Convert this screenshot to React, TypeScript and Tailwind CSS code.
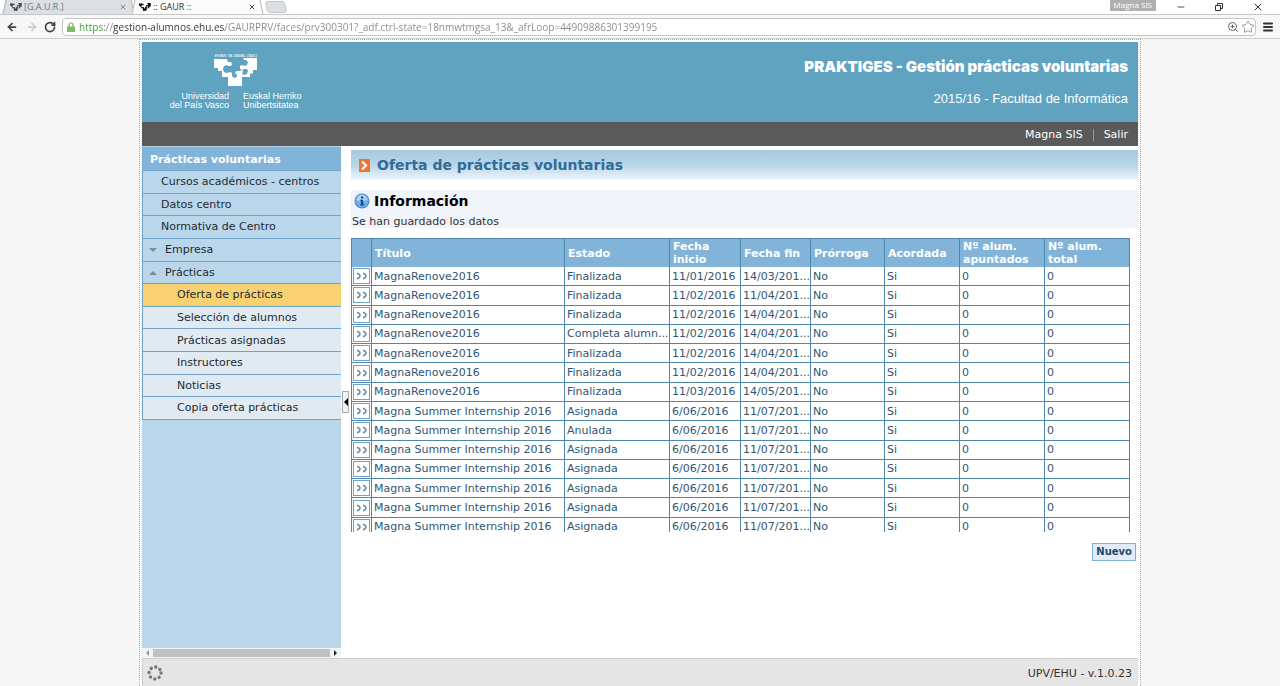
import React, { useState } from 'react';
import { Lock, Menu, Minus, RotateCw, Star, X, ZoomIn, ArrowLeft, ArrowRight } from 'lucide-react';

interface Practica {
  titulo: string;
  estado: string;
  inicio: string;
  fin: string;
}

const RENOVE = 'MagnaRenove2016';
const SUMMER = 'Magna Summer Internship 2016';

const practicas: Practica[] = [
  { titulo: RENOVE, estado: 'Finalizada', inicio: '11/01/2016', fin: '14/03/201...' },
  { titulo: RENOVE, estado: 'Finalizada', inicio: '11/02/2016', fin: '11/04/201...' },
  { titulo: RENOVE, estado: 'Finalizada', inicio: '11/02/2016', fin: '14/04/201...' },
  { titulo: RENOVE, estado: 'Completa alumn...', inicio: '11/02/2016', fin: '14/04/201...' },
  { titulo: RENOVE, estado: 'Finalizada', inicio: '11/02/2016', fin: '14/04/201...' },
  { titulo: RENOVE, estado: 'Finalizada', inicio: '11/02/2016', fin: '14/04/201...' },
  { titulo: RENOVE, estado: 'Finalizada', inicio: '11/03/2016', fin: '14/05/201...' },
  { titulo: SUMMER, estado: 'Asignada', inicio: '6/06/2016', fin: '11/07/201...' },
  { titulo: SUMMER, estado: 'Anulada', inicio: '6/06/2016', fin: '11/07/201...' },
  { titulo: SUMMER, estado: 'Asignada', inicio: '6/06/2016', fin: '11/07/201...' },
  { titulo: SUMMER, estado: 'Asignada', inicio: '6/06/2016', fin: '11/07/201...' },
  { titulo: SUMMER, estado: 'Asignada', inicio: '6/06/2016', fin: '11/07/201...' },
  { titulo: SUMMER, estado: 'Asignada', inicio: '6/06/2016', fin: '11/07/201...' },
  { titulo: SUMMER, estado: 'Asignada', inicio: '6/06/2016', fin: '11/07/201...' },
];

const columnas = ['Título', 'Estado', 'Fecha inicio', 'Fecha fin', 'Prórroga', 'Acordada', 'Nº alum. apuntados', 'Nº alum. total'];

const menu = [
  { label: 'Cursos académicos - centros', level: 1 },
  { label: 'Datos centro', level: 1 },
  { label: 'Normativa de Centro', level: 1 },
  { label: 'Empresa', level: 1, arrow: 'down' },
  { label: 'Prácticas', level: 1, arrow: 'up' },
  { label: 'Oferta de prácticas', level: 2 },
  { label: 'Selección de alumnos', level: 2 },
  { label: 'Prácticas asignadas', level: 2 },
  { label: 'Instructores', level: 2 },
  { label: 'Noticias', level: 2 },
  { label: 'Copia oferta prácticas', level: 2 },
];

function EhuMark({ className }: { className?: string }) {
  return (
    <svg viewBox="0 0 44 32" className={className} fill="currentColor" aria-hidden="true">
      <path d="M0 1h13l1 3 3 0 1 2-1 2-3 0-1-1-3 1-1 3 1 3 3 1 3-1 2 1 0 3 2 2 3-1 0-2-2-2 1-2 4 0 2-1 1 1-1 3 2 1 3-1 1-3-1-2-3 0-2 1-2-1 0-3 2-1 3 1 2-1 1-3-2-2-2 0-1-3h12l2 1v12h-4v3l-3 1v3h-8v9H14v-9H8v-6H4v-3H0z" />
    </svg>
  );
}

function BrowserTab({ title, active }: { title: string; active?: boolean }) {
  return (
    <div className="relative flex h-full w-[129px] items-center pl-1.5 pr-1.5">
      <div
        className={`absolute inset-y-0 left-0 w-1/2 -skew-x-12 border-l border-[#b5b5b5] ${active ? 'bg-[#fbfbfb]' : 'bg-[#dcdfe4]'}`}
      />
      <div
        className={`absolute inset-y-0 right-0 w-2/3 skew-x-12 border-r border-[#b5b5b5] ${active ? 'bg-[#fbfbfb]' : 'bg-[#dcdfe4]'}`}
      />
      <EhuMark className={`relative h-[9px] w-3 ${active ? 'text-black' : 'text-[#444]'}`} />
      <span className={`relative ml-0.5 flex-1 text-[9px] leading-[14px] ${active ? 'text-[#333]' : 'text-[#777]'}`}>{title}</span>
      <button aria-label="Cerrar pestaña" className="relative">
        <X className={`size-2 ${active ? 'text-[#444]' : 'text-[#888]'}`} strokeWidth={3} />
      </button>
    </div>
  );
}

function BrowserChrome() {
  const [url, setUrl] = useState(
    'https://gestion-alumnos.ehu.es/GAURPRV/faces/prv300301?_adf.ctrl-state=18nmwtmgsa_13&_afrLoop=44909886301399195'
  );

  return (
    <header className="font-['Open_Sans','Noto_Sans',sans-serif]">
      <div className="flex h-[14px] overflow-hidden bg-white pl-1">
        <BrowserTab title="[G.A.U.R.]" />
        <BrowserTab title=":: GAUR ::" active />
        <button aria-label="Nueva pestaña" className="my-px ml-1 w-5 skew-x-12 rounded-sm border border-[#c4c8ce] bg-[#dcdfe4]" />
        <div className="ml-auto flex items-start">
          <span className="mr-5 h-[11px] bg-[#b0b0b0] px-1 text-[8px] leading-[10px] text-white">Magna SIS</span>
          <div className="flex h-[14px] items-center gap-7 pr-4 text-[#333]">
            <button aria-label="Minimizar"><Minus className="size-2.5" /></button>
            <button aria-label="Restaurar">
              <svg viewBox="0 0 10 10" className="size-2.5" fill="none" stroke="currentColor">
                <path d="M1.5 3.500h5v5h-5zM3.500 3.500v-2h5v5h-2" />
              </svg>
            </button>
            <button aria-label="Cerrar"><X className="size-3" strokeWidth={2} /></button>
          </div>
        </div>
      </div>
      <div className="flex h-[25px] items-center border-y border-t-[#c8c8c8] border-b-[#cfcfc8] bg-[#f7f7f7] pl-1.5 pr-1.5">
        <button aria-label="Atrás"><ArrowLeft className="size-3 text-[#444]" strokeWidth={3.500} /></button>
        <button aria-label="Adelante" className="ml-2"><ArrowRight className="size-3 text-[#ccc]" strokeWidth={3.500} /></button>
        <button aria-label="Recargar" className="ml-1.5"><RotateCw className="size-3 text-[#444]" strokeWidth={3.500} /></button>
        <div className="ml-1.5 flex h-[18px] flex-1 items-center rounded-sm border border-[#c6c6c6] bg-white pl-1 text-[#666]">
          <svg viewBox="0 0 8 10" className="h-2.5 w-2" aria-hidden="true">
            <path d="M2 5V3a2 2 0 0 1 4 0v2" fill="none" stroke="#8a9a80" strokeWidth="1.200" />
            <path d="M0 4.500h8V10H0z" fill="#7cc15c" />
          </svg>
          <input
            aria-label="Dirección"
            value={url}
            onChange={(e) => setUrl(e.target.value)}
            className="ml-1 h-4 flex-1 bg-[linear-gradient(90deg,#3f9a37_0_26px,#888_26px_34px,#333_34px_146px,#888_146px)] bg-clip-text text-[10px] text-transparent outline-none"
          />
          <ZoomIn className="size-3" strokeWidth={2} />
          <Star className="ml-0.5 size-3.5 text-[#888]" strokeWidth={1.500} />
        </div>
        <button aria-label="Menú" className="ml-1.5"><Menu className="size-3 text-[#333]" strokeWidth={4} /></button>
      </div>
    </header>
  );
}

function Sidebar() {
  return (
    <aside className="flex w-[199px] shrink-0 flex-col bg-[#bad6ea]">
      <h2 className="h-[24px] border-t border-[#b5d2e6] bg-[#82b4d9] pl-2 text-[11px] leading-[25px] font-bold text-white">
        Prácticas voluntarias
      </h2>
      <nav className="grid h-[250px] auto-rows-fr border-b border-l border-[#6fa3cb] text-[11px] text-[#222b33]">
        {menu.map((item) => (
          <a
            key={item.label}
            href="#"
            className={`flex items-center border-t border-[#6fa3cb] pt-px ${
              item.label === 'Oferta de prácticas' ? 'bg-[#f8d272]' : item.level === 2 ? 'bg-[#e1e9f1]' : 'bg-[#bad6ea]'
            } ${item.level === 2 ? 'pl-[34px]' : item.arrow ? 'pl-1.5' : 'pl-[18px]'}`}
          >
            {item.arrow && (
              <svg viewBox="0 0 8 4" className="mr-2 h-1 w-2 fill-[#7f8c96]" aria-hidden="true">
                <path d={item.arrow === 'down' ? 'M0 0h8L4 4z' : 'M0 4h8L4 0z'} />
              </svg>
            )}
            {item.label}
          </a>
        ))}
      </nav>
      {/* barra de desplazamiento horizontal */}
      <div className="mt-auto flex h-[10px] items-center bg-[#f3f3f3] px-1">
        <svg viewBox="0 0 3 6" className="h-1.5 w-[3px] fill-[#999]" aria-hidden="true"><path d="M3 0v6L0 3z" /></svg>
        <div className="mx-1 h-2 flex-1 bg-[#c1c1c1]" />
        <svg viewBox="0 0 3 6" className="h-1.5 w-[3px] fill-[#222]" aria-hidden="true"><path d="M0 0v6l3-3z" /></svg>
      </div>
    </aside>
  );
}

function InfoIcon() {
  return (
    <svg viewBox="0 0 16 16" className="size-4" aria-hidden="true">
      <circle cx="8" cy="8" r="7.500" fill="#4a82c4" />
      <circle cx="8" cy="8" r="6.500" fill="#6fb0ea" />
      <path d="M2.500 7a5.500 5.500 0 0 1 11 0q-5.500 2-11 0z" fill="#a9d2f6" />
      <path d="M7 3.500h2.200v2H7zM6.200 6.700h3v4.500h1v1.300H6v-1.300h1V8h-.8z" fill="#174a94" />
    </svg>
  );
}

function TablaPracticas() {
  return (
    <div className="mr-2 h-[294px] overflow-hidden">
      <table className="h-[299px] w-full table-fixed border-separate border-spacing-0 border-t border-l border-[#4f86ab] text-[11px] leading-[13px] text-[#2f5674]">
        <colgroup>
          <col className="w-[20px]" />
          <col />
          <col className="w-[105px]" />
          <col className="w-[71px]" />
          <col className="w-[70px]" />
          <col className="w-[74px]" />
          <col className="w-[75px]" />
          <col className="w-[85px]" />
          <col className="w-[85px]" />
        </colgroup>
        <thead>
          <tr className="h-[28px] bg-[#82b4d9] text-left text-white">
            <th aria-label="Ver" className="border-r border-[#4f86ab] p-0" />
            {columnas.map((col) => (
              <th key={col} className="border-r border-[#4f86ab] py-0 pr-0 pl-[3px] align-middle font-bold">
                {col}
              </th>
            ))}
          </tr>
        </thead>
        <tbody>
          {practicas.map((p, i) => (
            <tr key={i}>
              <td className="border-r border-b border-[#4f86ab] p-px">
                <button aria-label="Ver práctica" className="flex h-4 w-full items-center justify-center border border-[#6ba3cc] bg-white">
                  <svg viewBox="0 0 12 8" className="h-2 w-3" fill="none" stroke="#6d8ea6" strokeWidth="1.600" aria-hidden="true">
                    <path d="M1 1.200q3 1 3 2.800t-3 2.800M7 1.200q3 1 3 2.800t-3 2.800" />
                  </svg>
                </button>
              </td>
              {[p.titulo, p.estado, p.inicio, p.fin, 'No', 'Si', '0', '0'].map((valor, j) => (
                <td key={j} className="border-r border-b border-[#4f86ab] py-0 pr-0 pl-0.5 whitespace-nowrap">
                  {valor}
                </td>
              ))}
            </tr>
          ))}
        </tbody>
      </table>
    </div>
  );
}

export default function App() {
  return (
    <div className="flex min-h-screen flex-col bg-[#f6f6f6] font-['DejaVu_Sans',Verdana,sans-serif]">
      <BrowserChrome />
      <div className="mx-auto flex w-full max-w-[1002px] flex-1 flex-col border border-b-0 border-dotted border-[#a9a0a4] bg-white px-0.5 pt-0.5">
        <div className="flex h-20 justify-between bg-[#5fa3c1] text-white">
          <div className="ml-6 flex w-[140px] flex-col items-center pt-3 font-['Liberation_Sans',Arial,sans-serif]">
            <span className="h-1 text-[4px] leading-[4px]">EMAN TA ZABAL ZAZU</span>
            <EhuMark className="h-8 w-11" />
            <div className="mt-0.5 grid grid-cols-2 gap-3.5 text-[9px] leading-[9px] whitespace-nowrap">
              <span className="text-right">Universidad<br />del País Vasco</span>
              <span>Euskal Herriko<br />Unibertsitatea</span>
            </div>
          </div>
          <div className="pt-[15px] pr-2.5 text-right font-['Liberation_Sans',Arial,sans-serif]">
            <h1 className="font-['Inter',sans-serif] text-[15px] leading-5 font-black">PRAKTIGES - Gestión prácticas voluntarias</h1>
            <p className="mt-3 text-[13px] leading-5">2015/16 - Facultad de Informática</p>
          </div>
        </div>
        <div className="flex h-6 items-center justify-end bg-[#5a5a5a] pt-0.5 pr-2.5 text-[11px] text-white">
          <a href="#">Magna SIS</a>
          <span className="mx-2.5 h-3 w-px bg-[#999]" />
          <a href="#">Salir</a>
        </div>

        <div className="relative flex flex-1">
          <Sidebar />
          <button
            aria-label="Contraer panel"
            className="absolute top-[245px] left-[200px] flex h-[22px] w-[7px] items-center justify-center border border-[#aaa] bg-[#f2f2f2]"
          >
            <svg viewBox="0 0 4 8" className="h-2 w-1" aria-hidden="true"><path d="M4 0v8L0 4z" /></svg>
          </button>
          <main className="min-w-0 flex-1 pt-1 pl-[10px]">
            <div className="flex h-[30px] items-center bg-linear-to-b from-[#a6c9e1] via-[#b8d5e8] to-[#f0f5fa] pl-2">
              <svg viewBox="0 0 11 13" className="h-[13px] w-[11px]" aria-hidden="true">
                <path d="M0 0h11v13H0z" fill="#ee762c" />
                <path d="M3 2.500l4 4-4 4" fill="none" stroke="#fff" strokeWidth="2.200" />
              </svg>
              <h2 className="ml-[7px] text-[14px] leading-5 font-bold text-[#2f6c98]">Oferta de prácticas voluntarias</h2>
            </div>
            <section className="mt-2.5 h-[38px] bg-[#f1f4fa]">
              <h3 className="flex h-[22px] items-center gap-1 pl-[3px] text-[14px] font-bold text-black">
                <InfoIcon />
                Información
              </h3>
              <p className="pl-px text-[11px] leading-5 text-[#333]">Se han guardado los datos</p>
            </section>
            <div className="mt-2.5">
              <TablaPracticas />
            </div>
            <div className="flex justify-end pt-[11px] pr-0.5">
              <button className="h-[18px] border border-[#7fb0d3] bg-[#e3ecf5] px-[3px] text-[10px] leading-4 font-bold text-[#1f4a6e]">
                Nuevo
              </button>
            </div>
          </main>
        </div>

        <footer className="flex h-7 items-center justify-between border-t border-l border-[#cfcfcf] bg-[#e5e5e5] pt-1 pr-1.5 pl-1 text-[11px] text-[#333]">
          <svg viewBox="0 0 16 16" className="mb-1 size-4" fill="none" stroke="#777" strokeWidth="3.400" strokeLinecap="round" aria-hidden="true">
            <circle cx="8" cy="8" r="6" strokeDasharray="0.010 4.700" />
          </svg>
          <span>UPV/EHU - v.1.0.23</span>
        </footer>
      </div>
    </div>
  );
}
